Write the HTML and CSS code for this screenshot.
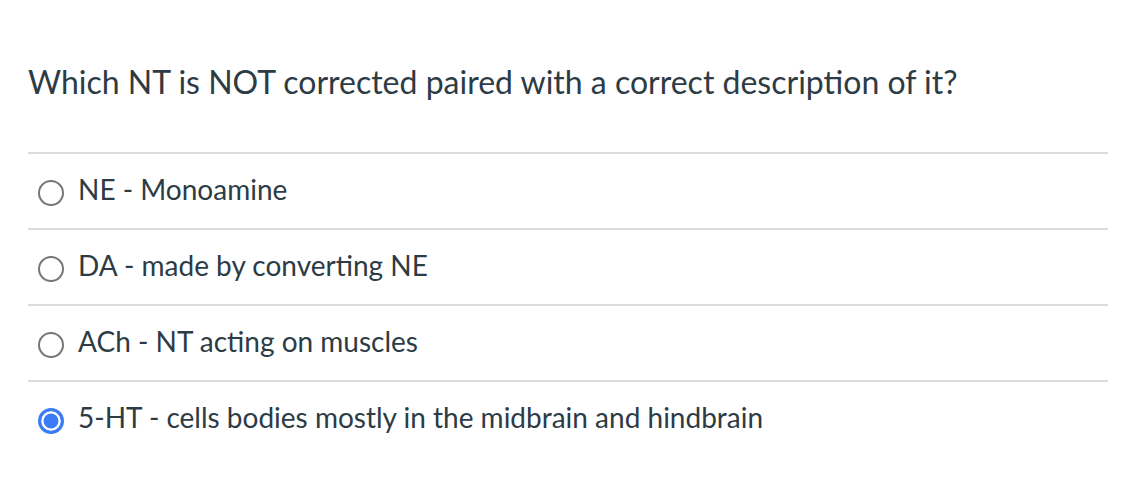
FILE: index.html
```html
<!DOCTYPE html>
<html>
<head>
<meta charset="utf-8">
<link rel="stylesheet" href="styles.css">
</head>
<body>
<div class="quiz">
  <h1 class="question">Which NT is NOT corrected paired with a correct description of it?</h1>
  <ul class="answers">
    <li class="answer"><span class="radio"></span><span class="label">NE - Monoamine</span></li>
    <li class="answer"><span class="radio"></span><span class="label">DA - made by converting NE</span></li>
    <li class="answer"><span class="radio"></span><span class="label">ACh - NT acting on muscles</span></li>
    <li class="answer"><span class="radio checked"></span><span class="label">5-HT - cells bodies mostly in the midbrain and hindbrain</span></li>
  </ul>
</div>
</body>
</html>
```
FILE: styles.css
```css
html, body {
  margin: 0;
  padding: 0;
  background: #ffffff;
}
body {
  font-family: Lato, "Noto Sans", sans-serif;
  color: #2d3b45;
}
.quiz {
  width: 1080px;
  padding: 58px 0 0 28px;
}
.question {
  margin: 0;
  font-size: 32px;
  font-weight: 400;
  line-height: 48px;
  height: 94px;
}
.answers {
  list-style: none;
  margin: 0;
  padding: 0;
  border-top: 2px solid #dcdcdc;
}
.answer {
  display: flex;
  align-items: center;
  gap: 14px;
  height: 74px;
  padding-left: 10px;
  border-bottom: 2px solid #dcdcdc;
  font-size: 28px;
}
.answer:last-child {
  border-bottom: none;
}
.label {
  line-height: 36px;
  margin-bottom: 4px;
}
.radio {
  width: 26px;
  height: 26px;
  margin-top: 4px;
  border: 2px solid #777777;
  border-radius: 50%;
  box-sizing: border-box;
  flex: none;
}
.radio.checked {
  border: 3px solid #3b7cf6;
  background: #3b7cf6;
  box-shadow: inset 0 0 0 2.5px #ffffff;
}
```
